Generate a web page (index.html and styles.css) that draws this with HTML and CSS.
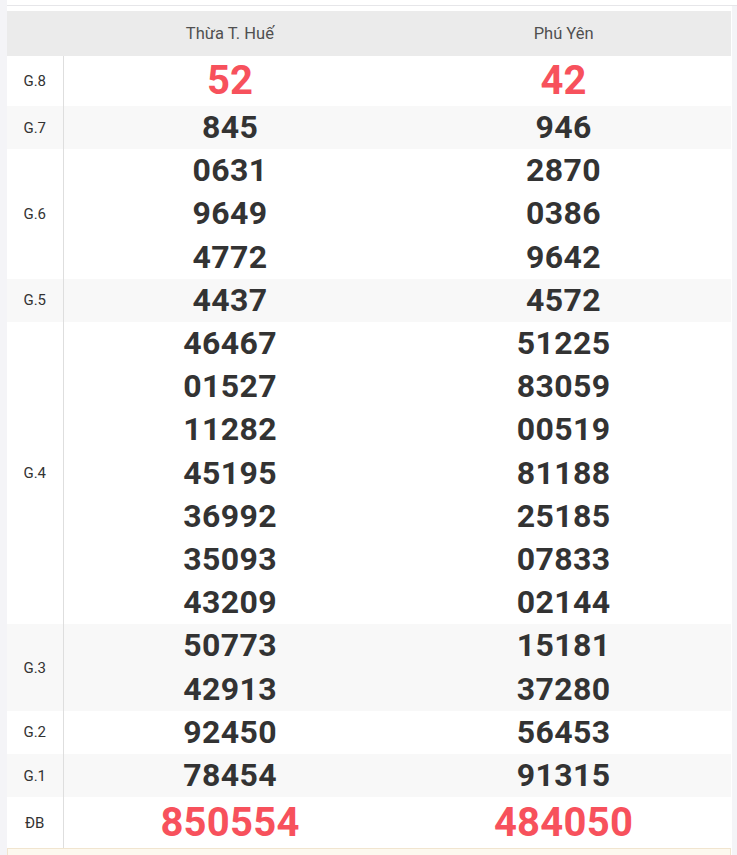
FILE: index.html
```html
<!DOCTYPE html>
<html lang="vi">
<head>
<meta charset="utf-8">
<link rel="stylesheet" href="styles.css">
</head>
<body>
<div class="topbar"></div>
<div class="panel">
  <table class="kq">
    <thead>
      <tr><th class="lbl"></th><th>Thừa T. Huế</th><th>Phú Yên</th></tr>
    </thead>
    <tbody>
      <tr class="g8"><td class="lbl">G.8</td><td><div class="n red big">52</div></td><td><div class="n red big">42</div></td></tr>
      <tr class="alt"><td class="lbl">G.7</td><td><div class="n">845</div></td><td><div class="n">946</div></td></tr>
      <tr><td class="lbl">G.6</td><td><div class="n">0631</div><div class="n">9649</div><div class="n">4772</div></td><td><div class="n">2870</div><div class="n">0386</div><div class="n">9642</div></td></tr>
      <tr class="alt"><td class="lbl">G.5</td><td><div class="n">4437</div></td><td><div class="n">4572</div></td></tr>
      <tr><td class="lbl">G.4</td><td><div class="n">46467</div><div class="n">01527</div><div class="n">11282</div><div class="n">45195</div><div class="n">36992</div><div class="n">35093</div><div class="n">43209</div></td><td><div class="n">51225</div><div class="n">83059</div><div class="n">00519</div><div class="n">81188</div><div class="n">25185</div><div class="n">07833</div><div class="n">02144</div></td></tr>
      <tr class="alt"><td class="lbl">G.3</td><td><div class="n">50773</div><div class="n">42913</div></td><td><div class="n">15181</div><div class="n">37280</div></td></tr>
      <tr><td class="lbl">G.2</td><td><div class="n">92450</div></td><td><div class="n">56453</div></td></tr>
      <tr class="alt"><td class="lbl">G.1</td><td><div class="n">78454</div></td><td><div class="n">91315</div></td></tr>
      <tr class="db"><td class="lbl">ĐB</td><td><div class="n red big">850554</div></td><td><div class="n red big">484050</div></td></tr>
    </tbody>
  </table>
  <div class="note"></div>
</div>
</body>
</html>
```
FILE: styles.css
```css
html, body {
  margin: 0;
  padding: 0;
}
body {
  background: #f4f4f7;
  font-family: Roboto, "Liberation Sans", Arial, sans-serif;
}
.topbar {
  margin-left: 7px;
  height: 5px;
  background: #fff;
  border-bottom: 1px solid #e6e6e9;
}
.panel {
  margin-left: 7px;
  width: 725px;
  background: #fff;
  padding-top: 5px;
}
.kq {
  width: 724px;
  border-collapse: collapse;
  table-layout: fixed;
}
.kq th {
  background: #ebebeb;
  height: 45px;
  padding: 0;
  font-weight: 400;
  font-size: 16.5px;
  color: #505050;
  text-align: center;
  vertical-align: middle;
}
.kq th.lbl,
.kq td.lbl {
  width: 56px;
}
.kq td {
  padding: 0;
  text-align: center;
  vertical-align: middle;
}
.kq td.lbl {
  font-size: 15px;
  color: #333;
  border-right: 1px solid #dedede;
}
.kq tr.alt td {
  background: #f8f8f8;
}
.n {
  font-size: 32px;
  line-height: 43.2px;
  font-weight: 700;
  color: #333;
  letter-spacing: 0.4px;
}
.n.big {
  font-size: 40px;
  line-height: 50px;
  letter-spacing: 0.3px;
}
.n.red {
  color: #f7515c;
}
.db .n.big {
  line-height: 51px;
}
.note {
  width: 722px;
  height: 10px;
  background: #fdf9ef;
  border: 1px solid #f1e5cf;
}
```
